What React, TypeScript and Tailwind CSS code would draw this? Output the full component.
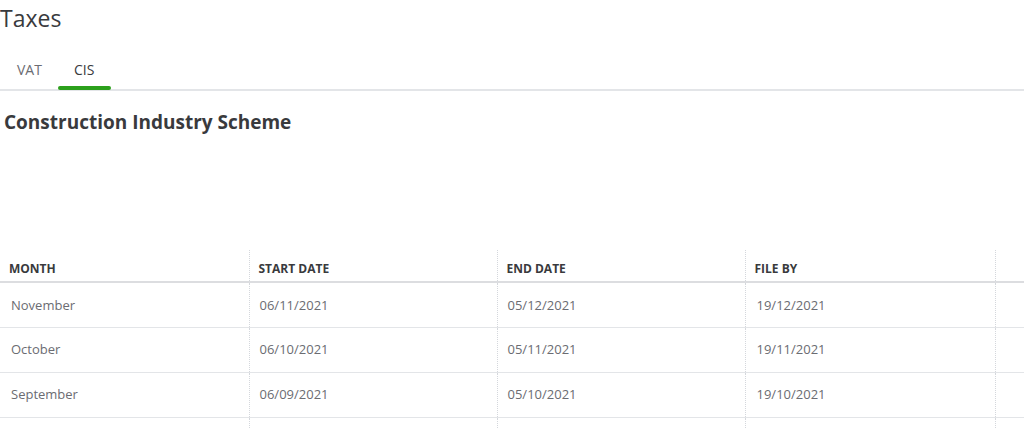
import React from 'react';

const rows = [
  { month: 'November', start: '06/11/2021', end: '05/12/2021', fileBy: '19/12/2021' },
  { month: 'October', start: '06/10/2021', end: '05/11/2021', fileBy: '19/11/2021' },
  { month: 'September', start: '06/09/2021', end: '05/10/2021', fileBy: '19/10/2021' },
];

export default function App() {
  return (
    <div className="w-[1024px] h-[428px] overflow-hidden bg-white text-[#393a3d]" style={{ fontFamily: '"Open Sans", Lato, sans-serif' }}>
      {/* Page title */}
      <h1 className="pt-[3px] h-[40px] text-[23px] leading-[30px]">Taxes</h1>

      {/* Tabs */}
      <div className="mt-[14px] flex border-b-2 border-[#e3e5e8]">
        <button className="h-[35px] pb-[4px] pl-[17px] pr-[16px] text-[14px] text-[#6b6c72]">VAT</button>
        <button className="relative h-[35px] pb-[4px] pl-[16px] pr-[17px] text-[14px] text-[#393a3d]">
          CIS
          <span className="absolute left-0 right-0 bottom-[-1px] h-[4px] rounded-sm bg-[#2ca01c]" />
        </button>
      </div>

      {/* Section heading */}
      <h2 className="mt-[19px] pl-[4px] text-[19px] font-bold leading-[24px]">Construction Industry Scheme</h2>

      {/* Table */}
      <table className="mt-[116px] w-full border-collapse table-fixed">
        <thead>
          <tr className="h-[32px] border-b-2 border-[#dcdde0]">
            <th className="w-[249px] pl-[9px] pt-[6px] text-left text-[12px] font-bold text-[#393a3d]">MONTH</th>
            <th className="w-[248px] pl-[9px] pt-[6px] text-left text-[12px] font-bold border-l border-dotted border-[#d4d7dc]">START DATE</th>
            <th className="w-[248px] pl-[9px] pt-[6px] text-left text-[12px] font-bold border-l border-dotted border-[#d4d7dc]">END DATE</th>
            <th className="w-[250px] pl-[9px] pt-[6px] text-left text-[12px] font-bold border-l border-dotted border-[#d4d7dc]">FILE BY</th>
            <th className="border-l border-dotted border-[#d4d7dc]" />
          </tr>
        </thead>
        <tbody>
          {rows.map((r) => (
            <tr key={r.month} className="h-[45px] border-b border-[#e3e5e8] text-[13px] text-[#6b6c72]">
              <td className="pl-[11px] pt-[1px]">{r.month}</td>
              <td className="pl-[10px] pt-[1px] border-l border-dotted border-[#d4d7dc]">{r.start}</td>
              <td className="pl-[10px] pt-[1px] border-l border-dotted border-[#d4d7dc]">{r.end}</td>
              <td className="pl-[11px] pt-[1px] border-l border-dotted border-[#d4d7dc]">{r.fileBy}</td>
              <td className="border-l border-dotted border-[#d4d7dc]" />
            </tr>
          ))}
          {/* next row, scrolled below the fold */}
          <tr className="h-[45px]">
            <td />
            <td className="border-l border-dotted border-[#d4d7dc]" />
            <td className="border-l border-dotted border-[#d4d7dc]" />
            <td className="border-l border-dotted border-[#d4d7dc]" />
            <td className="border-l border-dotted border-[#d4d7dc]" />
          </tr>
        </tbody>
      </table>
    </div>
  );
}
